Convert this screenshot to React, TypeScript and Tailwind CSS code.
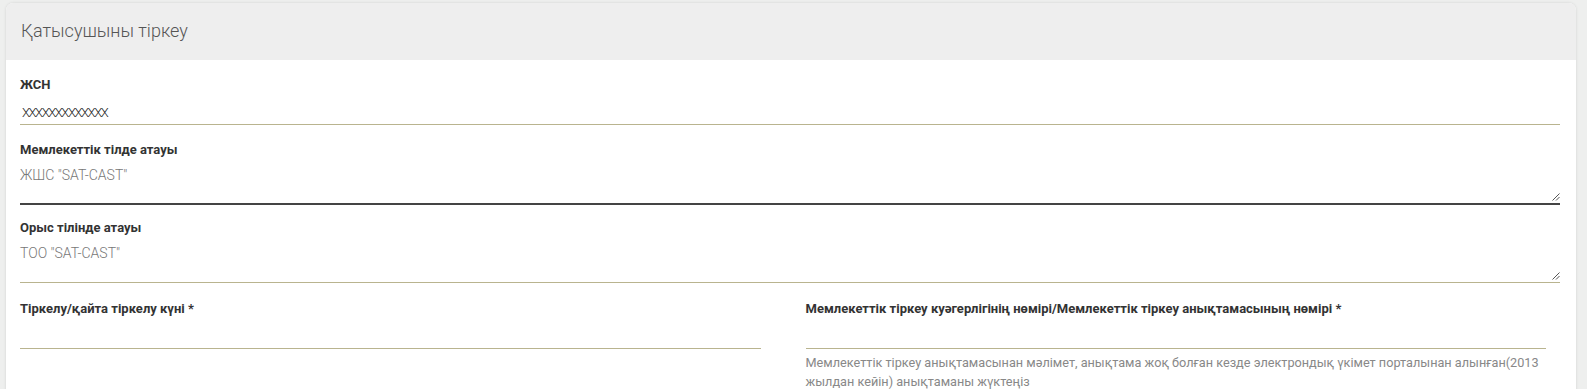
import React from 'react';

const ResizeGrip: React.FC = () => (
  <svg className="absolute right-0 bottom-[2px] w-[9px] h-[9px]" viewBox="0 0 9 9">
    <path d="M8.5 1.5 L1.5 8.5 M8.5 5 L5 8.5" stroke="#555" strokeWidth="1" fill="none" />
  </svg>
);

const App: React.FC = () => {
  return (
    <div className="h-[389px] overflow-hidden bg-[#eeefee] pl-[6px] pr-[11px] pt-[3px] font-['Roboto',sans-serif]">
      <div className="rounded-t-[7px] bg-white shadow-[0_0_3px_rgba(0,0,0,0.12)]">
        <div className="h-[57px] rounded-t-[7px] bg-[#eeeeee] pl-[15px] flex items-center">
          <h2 className="text-[18px] font-light text-[#555] leading-6 pb-[1px]">Қатысушыны тіркеу</h2>
        </div>

        <div className="pl-[14px] pr-[16px] pt-[17px] pb-[20px]">
          {/* ЖСН */}
          <label className="block text-[13px] font-bold text-[#333] leading-4">ЖСН</label>
          <div className="h-[32px] border-b border-[#b9b48f] pt-[10px] pl-[2px] text-[13px] font-light text-[#222] leading-5 tracking-[-1.4px]">
            XXXXXXXXXXXXX
          </div>

          {/* Мемлекеттік тілде атауы */}
          <label className="mt-[17px] block text-[13px] font-bold text-[#333] leading-4">Мемлекеттік тілде атауы</label>
          <div className="relative h-[47px] border-b-2 border-[#444] pt-[7px] text-[14px] font-light text-[#777] leading-5">
            ЖШС "SAT-CAST"
            <ResizeGrip />
          </div>

          {/* Орыс тілінде атауы */}
          <label className="mt-[15px] block text-[13px] font-bold text-[#333] leading-4">Орыс тілінде атауы</label>
          <div className="relative h-[47px] border-b border-[#b9b48f] pt-[7px] text-[14px] font-light text-[#777] leading-5">
            ТОО "SAT-CAST"
            <ResizeGrip />
          </div>

          <div className="mt-[18px] grid grid-cols-2 gap-x-[45px] pr-[14px]">
            <div>
              <label className="block text-[13px] font-bold text-[#333] leading-4">Тіркелу/қайта тіркелу күні *</label>
              <div className="h-[32px] border-b border-[#b9b48f]" />
            </div>
            <div>
              <label className="block text-[13px] font-bold text-[#333] leading-4">
                Мемлекеттік тіркеу куәгерлігінің нөмірі/Мемлекеттік тіркеу анықтамасының нөмірі *
              </label>
              <div className="h-[32px] border-b border-[#b9b48f]" />
              <p className="mt-[4px] text-[12.7px] text-[#888] leading-[19px]">
                Мемлекеттік тіркеу анықтамасынан мәлімет, анықтама жоқ болған кезде электрондық үкімет порталынан алынған(2013 жылдан кейін) анықтаманы жүктеңіз
              </p>
            </div>
          </div>
        </div>
      </div>
    </div>
  );
};

export default App;
